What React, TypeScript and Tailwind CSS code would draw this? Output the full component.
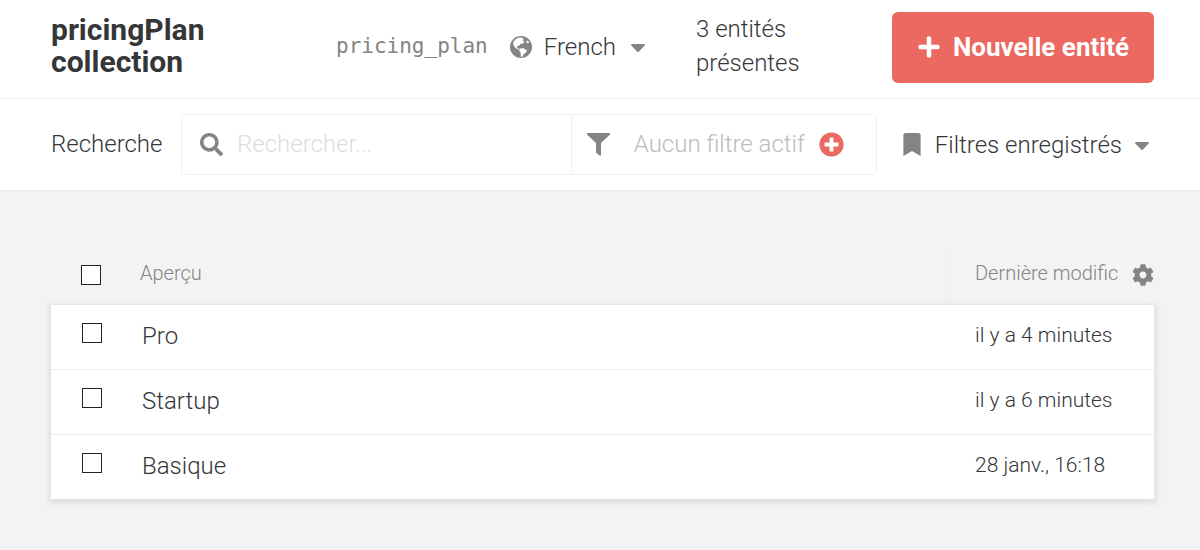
import React, { useState } from 'react';
import { FaBookmark, FaCaretDown, FaCog, FaPlus, FaPlusCircle, FaSearch } from 'react-icons/fa';

interface Entity {
  id: string;
  preview: string;
  updatedAt: string;
}

const entities: Entity[] = [
  { id: 'pro', preview: 'Pro', updatedAt: 'il y a 4 minutes' },
  { id: 'startup', preview: 'Startup', updatedAt: 'il y a 6 minutes' },
  { id: 'basique', preview: 'Basique', updatedAt: '28 janv., 16:18' }
];

interface CheckboxProps {
  label: string;
  checked: boolean;
  onChange: () => void;
}

const Checkbox: React.FC<CheckboxProps> = ({ label, checked, onChange }) => (
  <input
    type="checkbox"
    aria-label={label}
    checked={checked}
    onChange={onChange}
    className="block w-5 h-5 appearance-none border border-[#222222] bg-white checked:bg-[#343638]"
  />
);

const FilterIcon: React.FC = () => (
  <svg viewBox="0 0 23 23" className="w-[23px] h-[23px] shrink-0" fill="currentColor" aria-hidden="true">
    <path d="M0 0h23v1.5L14 10v12.5h-1.5L9 19.5V10L0 1.5z" />
  </svg>
);

const GlobeIcon: React.FC = () => (
  <svg viewBox="0 0 22 22" className="w-[22px] h-[22px] shrink-0 text-[#848484]" aria-hidden="true">
    <circle cx="11" cy="11" r="11" fill="currentColor" />
    <path
      fill="#ffffff"
      d="M8.2 1.8l3.2-.3 2.2 1.6-1 1.6 2 1-1.6 1.8-2.8.4-1.2 2.2-2-.2.4 2 2.2.8-1 .9-3.2-1.6L3.4 9 3 6.4l2-2.6z"
    />
    <path fill="#ffffff" d="M10 12.6l3.4-.4 3.6 2.2-1.2 2.4-2 1.2-1.6 3-1.4-.4-.2-3.8-1.6-2.2z" />
    <path fill="#ffffff" d="M17.4 4.2l1.8 2.2-1.6 1-1.2-1.4z" />
  </svg>
);

const Header: React.FC = () => (
  <header className="flex items-center min-h-[99px] pl-[51px] pr-[46px] pb-1 border-b border-[#efefef]">
    <h1 className="flex-1 pr-10 pb-0.5 text-[30px] leading-8 font-bold">pricingPlan collection</h1>
    <code className="font-['DejaVu_Sans_Mono',monospace] text-[21px] text-[#848484]">pricing_plan</code>
    <button type="button" className="flex items-center ml-[22px]">
      <GlobeIcon />
      <span className="ml-3">French</span>
      <FaCaretDown className="w-6 h-6 ml-2.5 text-[#848484]" />
    </button>
    <p className="w-[242px] pl-[46px] pr-16 pb-0.5 leading-[34px]">3 entités présentes</p>
    <button
      type="button"
      className="flex items-center h-[71px] px-[25px] rounded-md bg-[#eb6961] text-white text-[26px] font-bold"
    >
      <FaPlus className="w-6 h-6 mr-3" />
      Nouvelle entité
    </button>
  </header>
);

const SearchBar: React.FC = () => {
  const [query, setQuery] = useState('');

  return (
    <div className="flex items-center min-h-[92px] pl-[51px] pr-[46px] border-b border-[#ececec]">
      <label htmlFor="search" className="w-[130px] shrink-0 pb-0.5">Recherche</label>
      <div className="flex flex-1 h-[61px] border border-[#efefef] rounded">
        <div className="flex flex-1 items-center pl-[18px]">
          <FaSearch className="w-[23px] h-[23px] shrink-0 text-[#848484]" />
          <input
            id="search"
            type="text"
            value={query}
            onChange={(e) => setQuery(e.target.value)}
            placeholder="Rechercher..."
            className="flex-1 min-w-0 px-3.5 pb-0.5 outline-none placeholder:text-[#dddddd]"
          />
        </div>
        <div className="flex items-center w-[305px] pl-[15px] border-l border-[#efefef] text-[#848484]">
          <FilterIcon />
          <span className="ml-6 pb-0.5 text-[#bcbcbc]">Aucun filtre actif</span>
          <button type="button" aria-label="Ajouter un filtre" className="ml-3.5 text-[#eb6961]">
            <FaPlusCircle className="w-[25px] h-[25px]" />
          </button>
        </div>
      </div>
      <button type="button" className="flex items-center ml-6">
        <FaBookmark className="w-[22px] h-[23px] text-[#848484]" />
        <span className="ml-3">Filtres enregistrés</span>
        <FaCaretDown className="w-6 h-6 ml-2 text-[#848484]" />
      </button>
    </div>
  );
};

const EntityTable: React.FC = () => {
  const [selected, setSelected] = useState<string[]>([]);
  const allSelected = selected.length === entities.length;

  const toggle = (id: string) => {
    setSelected(selected.includes(id) ? selected.filter((s) => s !== id) : [...selected, id]);
  };

  return (
    <table className="w-full table-fixed border-separate border-spacing-0">
      <thead>
        <tr className="h-14 text-left text-[20px] text-[#848484]">
          <th className="w-[89px] pl-[30px] pb-1">
            <Checkbox
              label="Tout sélectionner"
              checked={allSelected}
              onChange={() => setSelected(allSelected ? [] : entities.map((e) => e.id))}
            />
          </th>
          <th className="pb-2 font-light">Aperçu</th>
          <th className="w-[209px] pl-[29px] pb-1 border-l border-[#eeeeee] font-light">
            <div className="flex items-center justify-between">
              <span className="pb-1 whitespace-nowrap">Dernière modific</span>
              <button type="button" aria-label="Configurer les colonnes">
                <FaCog className="w-[22px] h-[22px]" />
              </button>
            </div>
          </th>
        </tr>
      </thead>
      <tbody className="bg-white shadow-[0_2px_6px_2px_rgba(0,0,0,0.09)]">
        {entities.map((entity) => (
          <tr
            key={entity.id}
            className="h-[65px] last:h-16 [&:not(:last-child)>td]:border-b [&>td]:border-[#ececec]"
          >
            <td className="pl-[31px] pb-2">
              <Checkbox
                label={`Sélectionner ${entity.preview}`}
                checked={selected.includes(entity.id)}
                onChange={() => toggle(entity.id)}
              />
            </td>
            <td className="pl-[2px] pb-0.5">{entity.preview}</td>
            <td className="pl-[30px] pb-0.5 text-[21px]">{entity.updatedAt}</td>
          </tr>
        ))}
      </tbody>
    </table>
  );
};

const App: React.FC = () => (
  <div className="min-h-screen bg-[#f3f3f3] font-['Roboto',sans-serif] font-light text-[24px] text-[#343638]">
    <div className="bg-white">
      <Header />
      <SearchBar />
    </div>
    <main className="pt-[58px] pl-[51px] pr-[46px] pb-12">
      <EntityTable />
    </main>
  </div>
);

export default App;
